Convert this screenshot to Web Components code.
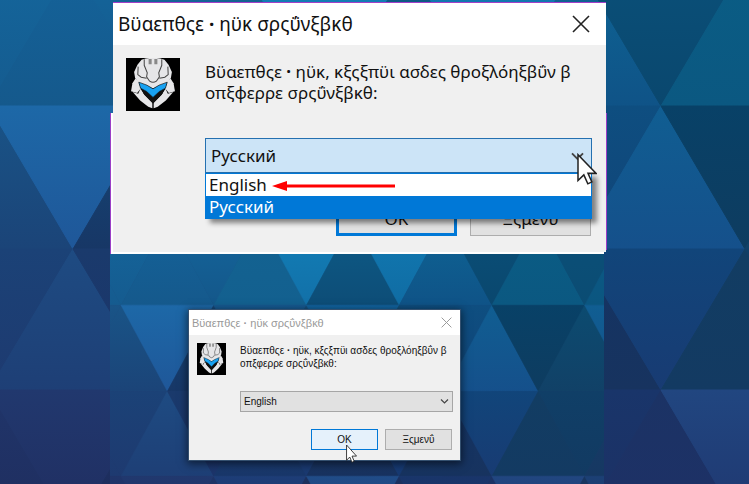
<!DOCTYPE html>
<html lang="el">
<head>
<meta charset="utf-8">
<title>Βϋαεπθςε · ηϋκ σρςΰνξβκθ</title>
<style>
  body {
    margin: 0;
    background: #17406f;
    font-family: "Noto Sans", "Open Sans", sans-serif;
  }
</style>
</head>
<body>
<setup-scene>
  <setup-dialog slot="first" size="large">
    <span slot="title">Βϋαεπθςε <b>·</b> ηϋκ σρςΰνξβκθ</span>
    <span slot="message">Βϋαεπθςε <b>·</b> ηϋκ, κξςξπϋι ασδες θροξλόηξβΰν β<br>οπξφερρε σρςΰνξβκθ:</span>
    <language-select slot="field" value="Русский" open></language-select>
    <dialog-button slot="actions" primary>OK</dialog-button>
    <dialog-button slot="actions">Ξςμενΰ</dialog-button>
  </setup-dialog>
  <setup-dialog slot="second" size="small">
    <span slot="title">Βϋαεπθςε <b>·</b> ηϋκ σρςΰνξβκθ</span>
    <span slot="message">Βϋαεπθςε <b>·</b> ηϋκ, κξςξπϋι ασδες θροξλόηξβΰν β<br>οπξφερρε σρςΰνξβκθ:</span>
    <language-select slot="field" value="English"></language-select>
    <dialog-button slot="actions" primary hovered>OK</dialog-button>
    <dialog-button slot="actions">Ξςμενΰ</dialog-button>
  </setup-dialog>
</setup-scene>

<script>
function attach(host, html) {
  const root = host.attachShadow({ mode: "open" });
  root.innerHTML = html;
  return root;
}

// One list of [top colour, bottom colour] per row of triangles, left to right.
// "down" is the parity of the columns whose triangles point down.
const ROWS = [
  { top: -36, bottom: 106, down: 0, fills: [
    ["#14669c", "#155b8f"], ["#14639a", "#15598c"], ["#14669c", "#14578a"], ["#136392", "#13608f"], ["#1280b8", "#1270a8"],
    ["#0d5c88", "#0d4d77"], ["#117ab3", "#106ca3"], ["#0e6595", "#0f5387"], ["#0a5079", "#0a476e"],
    ["#0a5d85", "#0b5881"], ["#0b5079", "#0b4c73"], ["#0b5a86", "#0b5680"], ["#0b5079", "#0b4c73"]
  ]},
  { top: 106, bottom: 249, down: 1, fills: [
    ["#195487", "#1b4478"], ["#1d68a7", "#1f5799"], ["#154777", "#173766"], ["#165b93", "#154b80"], ["#14507e", "#143f6d"],
    ["#1164a0", "#12508a"], ["#11507b", "#123c66"], ["#0e4e80", "#114478"], ["#105e92", "#15508b"],
    ["#084167", "#0e3c60"], ["#0c4b70", "#114167"], ["#105e92", "#15508b"], ["#0b4b70", "#103c63"]
  ]},
  { top: 249, bottom: 390, down: 0, fills: [
    ["#1b4277", "#1e3a70"], ["#1e4b82", "#1e3f76"], ["#1a3a6c", "#1c346a"], ["#173e71", "#19376a"], ["#19437c", "#1a3970"],
    ["#163866", "#18325f"], ["#134580", "#173972"], ["#143464", "#17335f"], ["#11457a", "#183b73"],
    ["#123d63", "#133a62"], ["#103f67", "#123a62"], ["#153c69", "#163862"], ["#173d70", "#19376a"]
  ]},
  { top: 390, bottom: 533, down: 1, fills: [
    ["#20356a", "#1f2d5e"], ["#21386e", "#202d60"], ["#1e3467", "#1d2a59"], ["#1d3d77", "#1f3062"], ["#1c315e", "#1c2953"],
    ["#204c88", "#1c3465"], ["#1b3160", "#1c2b57"], ["#19356a", "#1d3064"], ["#1b3365", "#1e3066"],
    ["#214680", "#1f366f"], ["#183660", "#183260"], ["#1c4075", "#1c3466"], ["#1b3562", "#193060"]
  ]}
];

class TriangleWallpaper extends HTMLElement {
  connectedCallback() {
    let defs = "";
    let shapes = "";
    ROWS.forEach((row, r) => {
      // the first column hangs off the left edge and borrows its neighbour's colour
      [row.fills[0], ...row.fills].forEach(([from, to], i) => {
        const mid = -11 + (i - 1) * 84;
        const pointsDown = i % 2 !== row.down;
        const base = pointsDown ? row.top : row.bottom;
        const tip = pointsDown ? row.bottom : row.top;
        defs += `<linearGradient id="g${r}-${i}" x2="0" y2="1"><stop stop-color="${from}"/><stop offset="1" stop-color="${to}"/></linearGradient>`;
        shapes += `<path fill="url(#g${r}-${i})" stroke="url(#g${r}-${i})" d="M${mid - 84} ${base}H${mid + 84}L${mid} ${tip}z"/>`;
      });
    });
    attach(this, `
      <style>
        :host { display: block; overflow: hidden; }
        svg { display: block; width: 100%; height: 100%; }
      </style>
      <svg viewBox="${this.getAttribute("view")}" preserveAspectRatio="none" aria-hidden="true">
        <defs>${defs}</defs>${shapes}
      </svg>`);
  }
}
customElements.define("triangle-wallpaper", TriangleWallpaper);

class SetupScene extends HTMLElement {
  connectedCallback() {
    attach(this, `
      <style>
        :host {
          display: grid;
          grid-template-columns: 110fr 494fr 145fr;
          grid-template-rows: auto 1fr;
          min-height: 100vh;
          position: relative;
        }
        .back { position: absolute; inset: 0; }
        .first {
          grid-column: 2;
          position: relative;
          z-index: 1;
          padding-top: 2px;
          border-bottom: 2px solid #fff;
        }
        .first ::slotted(*) { margin: 0 -2px 0 3px; }
        .rail {
          position: absolute;
          top: 113px;
          bottom: -2px;
          left: 0;
          width: 1px;
          background: #9b3fc6;
          border-right: 2px solid #fff;
        }
        .rail.right {
          left: auto;
          right: -3px;
          bottom: 2px;
          border: 0;
        }
        .second {
          grid-column: 2;
          position: relative;
          display: grid;
          grid-template-columns: 79fr 271fr 144fr;
          align-items: start;
          padding: 56px 0 22px;
        }
        .second ::slotted(*) { grid-column: 2; position: relative; }
      </style>
      <triangle-wallpaper class="back" view="0 0 749 484"></triangle-wallpaper>
      <section class="first">
        <slot name="first"></slot>
        <span class="rail"></span>
        <span class="rail right"></span>
      </section>
      <section class="second">
        <triangle-wallpaper class="back" view="-31 21 895 382"></triangle-wallpaper>
        <slot name="second"></slot>
      </section>`);
  }
}
customElements.define("setup-scene", SetupScene);

class HelmetIcon extends HTMLElement {
  connectedCallback() {
    attach(this, `
      <style>
        :host { display: block; }
        svg { display: block; width: 100%; height: 100%; }
      </style>
      <svg viewBox="0 0 160 160" preserveAspectRatio="none" aria-hidden="true">
        <path d="M0 0h160v160H0z"/>
        <g fill="#e6e6e8">
          <path d="M46 5Q80-6 114 5L126 20 136 42 133 60 122 76 98 84 80 92 62 84 38 76 27 60 24 42 34 20z"/>
          <path d="M28 62L19 76 15 100 33 106 44 92 36 70z"/>
          <path d="M132 62L141 76 145 100 127 106 116 92 124 70z"/>
          <path d="M20 103L36 108 43 93 55 112 78 134V152L66 147 42 128z"/>
          <path d="M140 103L124 108 117 93 105 112 82 134V152L94 147 118 128z"/>
        </g>
        <g fill="none" stroke="#444" stroke-width="3">
          <path d="M54 4V22L63 45 61 57 70 70Q80 77 90 70L99 57 97 45 106 22V4"/>
          <path d="M36 26L35 50 45 58 61 61M124 26L125 50 115 58 99 61"/>
        </g>
        <path fill="#888" d="M67 3h9v16h-9zM84 3h9v16h-9z"/>
        <path fill="#111" d="M43 84L80 112 117 84 108 108 80 138 52 108z"/>
        <path fill="#18a2f2" stroke="#111" stroke-width="2" d="M38 73L62 82 80 93 98 82 122 73 117 91 99 101 80 119 61 101 43 91z"/>
      </svg>`);
  }
}
customElements.define("helmet-icon", HelmetIcon);

class MousePointer extends HTMLElement {
  connectedCallback() {
    attach(this, `
      <style>
        :host { display: block; pointer-events: none; }
        svg { display: block; width: 100%; height: 100%; }
      </style>
      <svg viewBox="0 0 12 19" preserveAspectRatio="none" aria-hidden="true">
        <path fill="#fff" stroke="#222" stroke-width=".9" d="M.6 1V16.3L4.1 13 6.5 18.3 8.9 17.2 6.6 12.1H11.5z"/>
      </svg>`);
  }
}
customElements.define("mouse-pointer", MousePointer);

class SetupDialog extends HTMLElement {
  connectedCallback() {
    attach(this, `
      <style>
        :host {
          display: block;
          background: #f0f0f0;
          color: #111;
        }
        :host([size="large"]) {
          --title-height: 42px;
          --title-size: 19px;
          --title-pad: 5px;
          --close: 18px;
          --close-gap: 16px;
          --face: "Noto Sans", sans-serif;
          --text: 17px;
          --line: 21px;
          --icon-width: 54px;
          --icon-height: 53px;
          --pad: 13px;
          --side: 14px;
          --column-gap: 25px;
          --text-top: 3px;
          --field-height: 35px;
          --field-gap: 35px;
          --actions-gap: 28px;
          --button-width: 121px;
          --button-height: 35px;
          --button-gap: 13px;
          --bottom: 16px;
          border-top: 1px solid #a23fc8;
        }
        :host([size="small"]) {
          --title-height: 25px;
          --title-size: 11px;
          --title-pad: 3px;
          --title-color: #999;
          --close: 11px;
          --close-gap: 8px;
          --face: "Liberation Sans", "Noto Sans", sans-serif;
          --text: 10px;
          --line: 13px;
          --icon-width: 29px;
          --icon-height: 32px;
          --pad: 8px;
          --side: 7px;
          --column-gap: 14px;
          --text-top: 1px;
          --field-height: 21px;
          --field-gap: 21px;
          --actions-gap: 17px;
          --button-width: 67px;
          --button-height: 21px;
          --button-gap: 7px;
          --bottom: 10px;
          outline: 1px solid #34506f;
          box-shadow: 0 2px 8px 2px #0008;
        }
        header {
          display: flex;
          align-items: center;
          justify-content: space-between;
          height: var(--title-height);
          padding: 0 var(--close-gap) 0 var(--title-pad);
          background: #fff;
        }
        h1 {
          margin: 0;
          font: 400 var(--title-size) var(--face);
          color: var(--title-color, #111);
          white-space: nowrap;
        }
        .close {
          width: var(--close);
          height: var(--close);
          padding: 0;
          border: 0;
          background: none;
          color: var(--title-color, #222);
        }
        .close svg { display: block; width: 100%; height: 100%; }
        .body {
          display: grid;
          grid-template-columns: var(--icon-width) 1fr;
          column-gap: var(--column-gap);
          padding: var(--pad) var(--side) var(--bottom) var(--pad);
        }
        helmet-icon { width: var(--icon-width); height: var(--icon-height); }
        p {
          margin: var(--text-top) 0 0;
          font: var(--text)/var(--line) var(--face);
          white-space: nowrap;
        }
        .field { margin-top: var(--field-gap); }
        .actions {
          display: flex;
          justify-content: flex-end;
          gap: var(--button-gap);
          margin-top: var(--actions-gap);
          padding-right: 1px;
        }
      </style>
      <header>
        <h1><slot name="title"></slot></h1>
        <button class="close" aria-label="Close">
          <svg viewBox="0 0 18 18"><path d="M1 1L17 17M17 1L1 17" fill="none" stroke="currentColor" stroke-width="1.6"/></svg>
        </button>
      </header>
      <div class="body">
        <helmet-icon></helmet-icon>
        <div>
          <p><slot name="message"></slot></p>
          <div class="field"><slot name="field"></slot></div>
          <div class="actions"><slot name="actions"></slot></div>
        </div>
      </div>`);
  }
}
customElements.define("setup-dialog", SetupDialog);

class LanguageSelect extends HTMLElement {
  connectedCallback() {
    const value = this.getAttribute("value");
    const languages = ["English", "Русский"];
    const options = languages.map(name => `<option${name === value ? " selected" : ""}>${name}</option>`).join("");
    const items = languages.map(name => `<li role="option" aria-selected="${name === value}">${name}</li>`).join("");
    attach(this, `
      <style>
        :host {
          display: block;
          position: relative;
        }
        select {
          appearance: none;
          display: block;
          box-sizing: border-box;
          width: 100%;
          height: var(--field-height);
          padding: 0 3px;
          border: 1px solid #a6a6a6;
          border-radius: 0;
          background: #e1e1e1;
          color: #111;
          font: var(--text) var(--face);
        }
        :host([open]) select {
          padding: 0 5px;
          border-color: #2470b0;
          background: #cce4f7;
        }
        .chevron {
          position: absolute;
          right: 4px;
          top: 7px;
          width: 9px;
          height: 7px;
          pointer-events: none;
        }
        :host([open]) .chevron {
          right: 7px;
          top: 13px;
          width: 15px;
          height: 11px;
        }
        ul {
          position: absolute;
          z-index: 1;
          top: 100%;
          left: 0;
          right: 0;
          margin: 0;
          padding: 0;
          list-style: none;
          border: 1px solid #0078d7;
          background: #fff;
          box-shadow: 5px 4px 5px #0007;
          font: var(--text)/22px var(--face);
        }
        li { padding: 0 3px; }
        li[aria-selected="true"] { background: #0078d7; color: #fff; }
        .arrow {
          position: absolute;
          z-index: 2;
          left: 67px;
          top: 42px;
          width: 124px;
          height: 12px;
        }
        mouse-pointer {
          position: absolute;
          z-index: 3;
          right: -5px;
          top: 15px;
          width: 20px;
          height: 32px;
        }
      </style>
      <select aria-label="Language">${options}</select>
      <svg class="chevron" viewBox="0 0 9 7" aria-hidden="true"><path d="M1 1.5L4.5 5 8 1.5" fill="none" stroke="#444" stroke-width="1.2"/></svg>
      ${this.hasAttribute("open") ? `
      <ul role="listbox" aria-label="Languages">${items}</ul>
      <svg class="arrow" viewBox="0 0 124 12" aria-hidden="true">
        <path fill="#f00" d="M0 6L15 1V4.5H123V7.5H15V11z"/>
      </svg>
      <mouse-pointer></mouse-pointer>` : ""}`);
  }
}
customElements.define("language-select", LanguageSelect);

class DialogButton extends HTMLElement {
  connectedCallback() {
    attach(this, `
      <style>
        :host {
          display: block;
          position: relative;
        }
        button {
          display: block;
          box-sizing: border-box;
          width: var(--button-width);
          height: var(--button-height);
          padding: 0;
          border: 1px solid #adadad;
          background: #e1e1e1;
          color: #111;
          font: var(--text) var(--face);
        }
        :host([primary]) button { border: 3px solid #0078d7; }
        :host([hovered]) button {
          border-width: 1px;
          background: #e5f1fb;
        }
        mouse-pointer {
          position: absolute;
          left: 35px;
          top: 15px;
          width: 11px;
          height: 19px;
        }
      </style>
      <button><slot></slot></button>
      ${this.hasAttribute("hovered") ? "<mouse-pointer></mouse-pointer>" : ""}`);
  }
}
customElements.define("dialog-button", DialogButton);
</script>
</body>
</html>
